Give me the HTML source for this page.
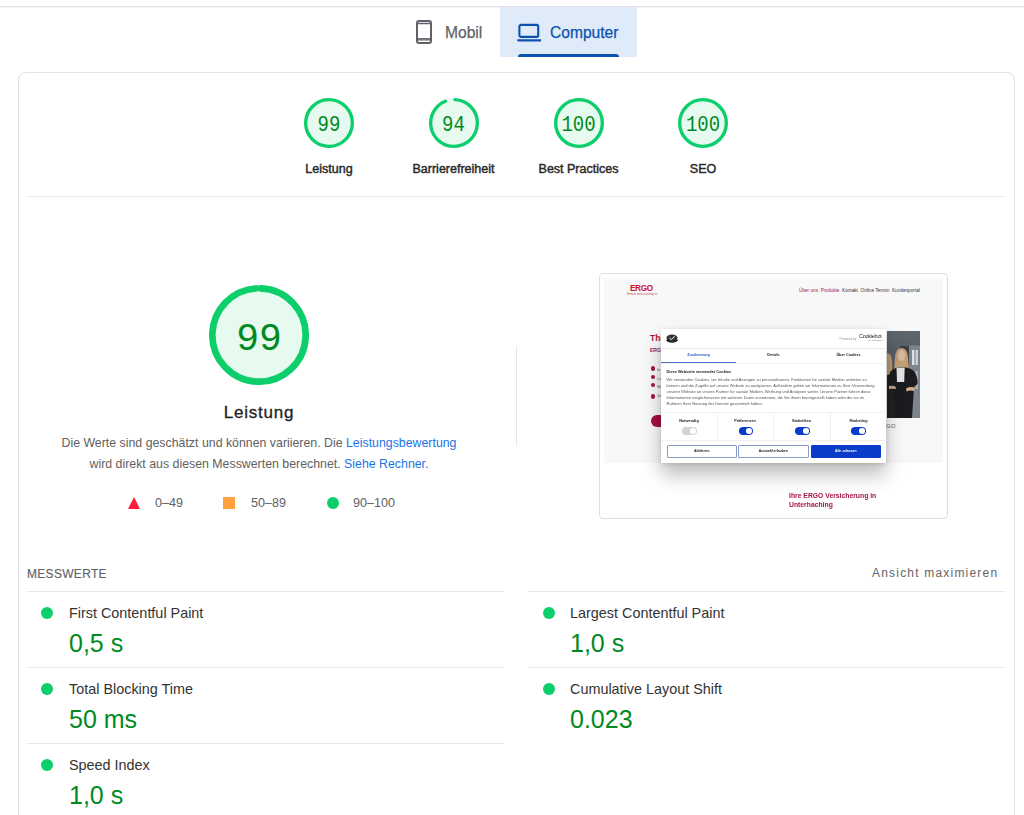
<!DOCTYPE html>
<html><head><meta charset="utf-8">
<style>
*{box-sizing:border-box}
html,body{margin:0;padding:0}
body{width:1024px;height:815px;overflow:hidden;background:#fff;font-family:"Liberation Sans",sans-serif;position:relative;color:#202124}
.a{position:absolute}
.topline{left:0;top:6px;width:1024px;height:1px;background:#e1e1e6;box-shadow:0 1px 0 #f4f4f7}
.tabd{left:500px;top:7px;width:137px;height:50px;background:#dfebf9}
.tabd .ul{position:absolute;left:18px;top:47px;width:101px;height:3px;background:#0b51b0;border-radius:3px 3px 0 0}
.tabtxt{font-size:15.6px;line-height:17px;margin-top:1px;-webkit-text-stroke:0.25px currentColor;white-space:nowrap}
.card{left:18px;top:72px;width:997px;height:760px;border:1px solid #e1e1e6;border-radius:8px}
.hr{height:1px;background:#e6e6e6}
.g{width:50px;height:50px}
.gnum{font-family:"Liberation Mono",monospace;font-size:19px;transform:scaleY(1.15);color:#008a1f;text-align:center;width:60px;line-height:20px}
.glbl{font-size:12.5px;letter-spacing:0px;-webkit-text-stroke:0.45px currentColor;color:#2a2a2a;white-space:nowrap;text-align:center;line-height:16px;width:120px}
.desc{font-size:12.35px;color:#616161;line-height:21px;text-align:center;white-space:nowrap}
.desc a{color:#1a73e8;text-decoration:none}
.leg{font-size:12.6px;color:#616161;line-height:16px;white-space:nowrap}
.mh{font-size:12px;color:#5f6368;-webkit-text-stroke:0.2px currentColor;letter-spacing:0.3px;line-height:14px;white-space:nowrap}
.mt{font-size:14.4px;color:#333;line-height:16px;white-space:nowrap}
.mv{font-size:25px;color:#008a1f;line-height:28px;white-space:nowrap}
.dot{width:12px;height:12px;border-radius:50%;background:#0cce6b}
.snav{font-size:4.7px;color:#333;line-height:5px;white-space:nowrap}
.chk{width:4.6px;height:4.6px;border-radius:50%;background:#a3173d}
.dtab{font-size:3.75px;font-weight:bold;color:#222;text-align:center;line-height:5px;white-space:nowrap}
.dlbl{font-size:3.8px;font-weight:bold;color:#222;text-align:center;line-height:4px;white-space:nowrap}
.tg{width:14.5px;height:7.6px;border-radius:4px;background:#0a3cc9}
.tg::after{content:"";position:absolute;right:1px;top:1px;width:5.6px;height:5.6px;border-radius:50%;background:#fff}
.dbtn{height:12.5px;border:0.8px solid #8a9cc8;border-radius:1px;font-size:3.4px;font-weight:bold;color:#222;text-align:center;line-height:11px;white-space:nowrap;background:#fff}
</style></head>
<body>
<div class="a topline"></div>

<!-- tabs -->
<svg class="a" style="left:416px;top:20px" width="16" height="24" viewBox="0 0 16 24">
  <rect x="1" y="1" width="14" height="22" rx="2" fill="none" stroke="#5f6368" stroke-width="2"/>
  <rect x="1" y="18" width="14" height="3" fill="#5f6368" opacity="0.5"/>
  <line x1="1" y1="3.5" x2="15" y2="3.5" stroke="#5f6368" stroke-width="1.5"/>
  <line x1="1" y1="19" x2="15" y2="19" stroke="#5f6368" stroke-width="1.5"/>
</svg>
<div class="a tabtxt" style="left:445px;top:23px;color:#5f6368">Mobil</div>

<div class="a tabd">
  <svg class="a" style="left:17px;top:16px" width="24" height="19" viewBox="0 0 24 19">
    <rect x="2.4" y="1.9" width="18.8" height="12" rx="1.6" fill="none" stroke="#0b51b0" stroke-width="2.1"/>
    <line x1="1.2" y1="17.3" x2="23.3" y2="17.3" stroke="#0b51b0" stroke-width="2.2" stroke-linecap="round"/>
  </svg>
  <div class="a tabtxt" style="left:50px;top:16px;color:#0b51b0">Computer</div>
  <div class="ul"></div>
</div>

<!-- card -->
<div class="a card"></div>

<!-- small gauges -->
<svg class="a" style="left:304px;top:98px" width="50" height="50" viewBox="0 0 120 120">
  <circle cx="60" cy="60" r="56" fill="#e7faf0" stroke="#e7faf0" stroke-width="8"/>
  <circle cx="60" cy="60" r="56" fill="none" stroke="#0cce6b" stroke-width="8" stroke-linecap="round" stroke-dasharray="345 352" transform="rotate(-87.85 60 60)"/>
</svg>
<div class="a gnum" style="left:299px;top:115px">99</div>
<div class="a glbl" style="left:269px;top:161px">Leistung</div>
<svg class="a" style="left:428.5px;top:98px" width="50" height="50" viewBox="0 0 120 120">
  <circle cx="60" cy="60" r="56" fill="#e7faf0" stroke="#e7faf0" stroke-width="8"/>
  <circle cx="60" cy="60" r="56" fill="none" stroke="#0cce6b" stroke-width="8" stroke-linecap="round" stroke-dasharray="326.3 352" transform="rotate(-87.5 60 60)"/>
</svg>
<div class="a gnum" style="left:423.5px;top:115px">94</div>
<div class="a glbl" style="left:393.5px;top:161px">Barrierefreiheit</div>
<svg class="a" style="left:553.5px;top:98px" width="50" height="50" viewBox="0 0 120 120">
  <circle cx="60" cy="60" r="56" fill="#e7faf0" stroke="#e7faf0" stroke-width="8"/>
  <circle cx="60" cy="60" r="56" fill="none" stroke="#0cce6b" stroke-width="8" stroke-linecap="round" stroke-dasharray="351.86 352" transform="rotate(-90 60 60)"/>
</svg>
<div class="a gnum" style="left:548.5px;top:115px">100</div>
<div class="a glbl" style="left:518.5px;top:161px">Best Practices</div>
<svg class="a" style="left:678px;top:98px" width="50" height="50" viewBox="0 0 120 120">
  <circle cx="60" cy="60" r="56" fill="#e7faf0" stroke="#e7faf0" stroke-width="8"/>
  <circle cx="60" cy="60" r="56" fill="none" stroke="#0cce6b" stroke-width="8" stroke-linecap="round" stroke-dasharray="351.86 352" transform="rotate(-90 60 60)"/>
</svg>
<div class="a gnum" style="left:673px;top:115px">100</div>
<div class="a glbl" style="left:643px;top:161px">SEO</div>


<div class="a hr" style="left:27px;top:196px;width:978px"></div>

<!-- big gauge -->
<svg class="a" style="left:209px;top:285px" width="100" height="100" viewBox="0 0 120 120">
  <circle cx="60" cy="60" r="56" fill="#e7faf0" stroke="#e7faf0" stroke-width="8"/>
  <circle cx="60" cy="60" r="56" fill="none" stroke="#0cce6b" stroke-width="8" stroke-linecap="round" stroke-dasharray="345 352" transform="rotate(-87.85 60 60)"/>
</svg>
<div class="a" style="left:209px;top:321px;width:100px;text-align:center;font-family:'Liberation Mono',monospace;font-size:38px;line-height:38px;color:#008a1f">99</div>
<div class="a" style="left:159px;top:403px;width:200px;text-align:center;font-size:17px;letter-spacing:0.75px;-webkit-text-stroke:0.3px currentColor;line-height:20px;color:#222">Leistung</div>
<div class="a desc" style="left:0;top:433px;width:518px">Die Werte sind geschätzt und können variieren. Die <a>Leistungsbewertung</a><br>wird direkt aus diesen Messwerten berechnet. <a>Siehe Rechner.</a></div>

<svg class="a" style="left:128px;top:497px" width="12" height="12" viewBox="0 0 12 12"><polygon points="6,0 12,12 0,12" fill="#ff1f3a"/></svg>
<div class="a leg" style="left:155px;top:495px">0–49</div>
<div class="a" style="left:223px;top:497px;width:12px;height:12px;background:#ffa23d"></div>
<div class="a leg" style="left:251px;top:495px">50–89</div>
<div class="a dot" style="left:327px;top:497px"></div>
<div class="a leg" style="left:353px;top:495px">90–100</div>

<div class="a" style="left:516px;top:346px;width:1px;height:100px;background:#e6e6e6"></div>

<!-- screenshot -->
<div class="a" id="shotwrap" style="left:599px;top:273px;width:349px;height:246px;border:1px solid #dedede;border-radius:4px;overflow:hidden;background:#fff"><div class="a" id="shotin" style="left:0;top:0;width:347px;height:244px;filter:blur(0.3px)">
  <div class="a" style="left:4px;top:4px;width:339px;height:185px;background:#f8f8f8"></div>
  <div class="a" style="left:30px;top:10px;font-size:8.2px;font-weight:bold;color:#c8102e;line-height:10px;letter-spacing:-0.35px">ERGO</div>
  <div class="a" style="left:27px;top:18.5px;font-size:2.6px;line-height:3px;color:#c04060;white-space:nowrap">Einfach, weil es wichtig ist.</div>
  <div class="a snav" style="left:199px;top:14px">
    <span style="color:#a01a4a">Über uns</span>&nbsp;&nbsp;<span style="color:#a01a4a">Produkte</span>&nbsp;&nbsp;Kontakt&nbsp;&nbsp;Online Termin&nbsp;&nbsp;Kundenportal
  </div>
  <div class="a" style="left:50px;top:59px;font-size:8.5px;font-weight:bold;color:#a3173d;line-height:10px">The</div>
  <div class="a" style="left:50px;top:72.5px;font-size:5px;font-weight:bold;color:#a3173d;line-height:6px">ERGO</div>
  <div class="a chk" style="left:50.5px;top:92px"></div>
  <div class="a chk" style="left:50.5px;top:100.5px"></div>
  <div class="a chk" style="left:50.5px;top:108.8px"></div>
  <div class="a chk" style="left:50.5px;top:120px"></div>
  <div class="a" style="left:57px;top:92px;font-size:4px;line-height:8.5px;color:#555">In<br>Lo<br>Mi<br>Je</div>
  <div class="a" style="left:51px;top:140.5px;width:30px;height:12.5px;border-radius:6.5px;background:#a50f3c"></div>
  <svg class="a" style="left:286.5px;top:57px;filter:blur(0.35px)" width="33" height="87" viewBox="0 0 33 87">
    <defs><linearGradient id="pg" x1="0" y1="0" x2="0" y2="1"><stop offset="0" stop-color="#5e666d"/><stop offset="0.5" stop-color="#50575d"/><stop offset="1" stop-color="#383c40"/></linearGradient></defs>
    <rect width="33" height="87" fill="url(#pg)"/>
    <rect x="13" y="15" width="9" height="72" fill="#3b4045"/>
    <rect x="22" y="14.5" width="11" height="73" fill="#7e8489"/>
    <rect x="25" y="19" width="2.4" height="15" fill="#dfe2e4"/><rect x="28.5" y="19" width="2.4" height="15" fill="#d0d3d6"/>
    <rect x="25" y="40" width="2.4" height="18" fill="#b9bdc0"/><rect x="28.5" y="40" width="2.4" height="18" fill="#aeb2b5"/>
    <path d="M0 22 Q4 22 5 29 L5.5 45 L0 45Z" fill="#b89870"/>
    <path d="M0 44 L8 42 L9 87 L0 87Z" fill="#202124"/>
    <path d="M8 27 Q8.5 17 14.5 17 Q20.5 17 21 27 L22 39 L19 37 L10 37 L7 39Z" fill="#c29f76"/>
    <ellipse cx="14.5" cy="24.5" rx="3.6" ry="5.4" fill="#d8b9a0"/>
    <path d="M3 41 Q8 36 14 36 Q22 36 27 40 Q31 46 30.5 53 L27 56 L25 87 L8 87 L7 60 L2 57Z" fill="#1b1c1f"/>
    <path d="M9.5 36.5 L17.7 36.5 L17.2 51 L10 51Z" fill="#e4e4e4"/>
    <path d="M19 57.5 Q24 55 28 57 L27 60 Q23 59 19.5 60.5Z" fill="#d2ad90"/>
    <path d="M2 55 Q6 54 9 56 L8.5 58 Q5 57.5 2 58Z" fill="#caa58a"/>
  </svg>
  <div class="a" style="left:286px;top:148px;font-size:6.2px;color:#666;line-height:8px">GO</div>
  <div class="a" style="left:189px;top:216.5px;font-size:6.8px;font-weight:bold;color:#a3173d;line-height:9.7px">Ihre ERGO Versicherung in<br>Unterhaching</div>

  <div class="a" id="dlg" style="left:61px;top:55.2px;width:225px;height:134px;background:#fff;box-shadow:0 12px 18px rgba(0,0,0,0.26),0 1px 5px rgba(0,0,0,0.14)">
    <svg class="a" style="left:5px;top:5px" width="12" height="9" viewBox="0 0 12 9"><ellipse cx="6" cy="6.2" rx="5.5" ry="2.6" fill="#222"/><ellipse cx="6" cy="3.8" rx="5.5" ry="3.2" fill="#333"/><path d="M3.5 4 L5.3 5.5 L8.7 2.3" stroke="#fff" stroke-width="1" fill="none"/></svg>
    <div class="a" style="left:178.5px;top:7.6px;font-size:3.2px;color:#999;line-height:4px;white-space:nowrap">Powered by</div>
    <div class="a" style="left:198px;top:4.2px;font-size:5.5px;color:#2a2a2a;line-height:7px;letter-spacing:-0.25px">Cookiebot</div><div class="a" style="left:208px;top:10.2px;font-size:2px;color:#777;line-height:2px;white-space:nowrap">by Usercentrics</div>
    <div class="a" style="left:0;top:19px;width:226px;height:1px;background:#ececec"></div>
    <div class="a dtab" style="left:0;top:23.5px;width:75px;color:#2c56c9">Zustimmung</div>
    <div class="a dtab" style="left:75px;top:23.5px;width:75px">Details</div>
    <div class="a dtab" style="left:150px;top:23.5px;width:75px">Über Cookies</div>
    <div class="a" style="left:0;top:33.5px;width:226px;height:1px;background:#f0f0f0"></div>
    <div class="a" style="left:0;top:33px;width:75px;height:1px;background:#4d6fc9"></div>
    <div class="a" style="left:5.5px;top:40px;font-size:3.88px;font-weight:bold;color:#222;line-height:5px;white-space:nowrap">Diese Webseite verwendet Cookies</div>
    <div class="a" style="left:5.5px;top:47.5px;font-size:4.03px;color:#555;line-height:6.1px;white-space:nowrap">Wir verwenden Cookies, um Inhalte und Anzeigen zu personalisieren, Funktionen für soziale Medien anbieten zu<br>können und die Zugriffe auf unsere Website zu analysieren. Außerdem geben wir Informationen zu Ihrer Verwendung<br>unserer Website an unsere Partner für soziale Medien, Werbung und Analysen weiter. Unsere Partner führen diese<br>Informationen möglicherweise mit weiteren Daten zusammen, die Sie ihnen bereitgestellt haben oder die sie im<br>Rahmen Ihrer Nutzung der Dienste gesammelt haben.</div>
    <div class="a" style="left:0;top:83px;width:226px;height:1px;background:#f0f0f0"></div>
    <div class="a" style="left:56px;top:84px;width:1px;height:27px;background:#f0f0f0"></div>
    <div class="a" style="left:112px;top:84px;width:1px;height:27px;background:#f0f0f0"></div>
    <div class="a" style="left:169px;top:84px;width:1px;height:27px;background:#f0f0f0"></div>
    <div class="a" style="left:0;top:111px;width:226px;height:1px;background:#f0f0f0"></div>
    <div class="a dlbl" style="left:0;top:89.5px;width:56px">Notwendig</div>
    <div class="a dlbl" style="left:56px;top:89.5px;width:56px">Präferenzen</div>
    <div class="a dlbl" style="left:112px;top:89.5px;width:57px">Statistiken</div>
    <div class="a dlbl" style="left:169px;top:89.5px;width:57px">Marketing</div>
    <div class="a tg" style="left:21px;top:98.2px;background:#d4d4d4"></div>
    <div class="a tg" style="left:77.5px;top:98.2px"></div>
    <div class="a tg" style="left:134px;top:98.2px"></div>
    <div class="a tg" style="left:190px;top:98.2px"></div>
    <div class="a dbtn" style="left:5.5px;top:116px;width:70.5px">Ablehnen</div>
    <div class="a dbtn" style="left:77px;top:116px;width:70.5px">Auswahl erlauben</div>
    <div class="a dbtn" style="left:149.5px;top:116px;width:70.5px;background:#0a3cc9;border-color:#0a3cc9;color:#fff">Alle zulassen</div>
  </div>
</div>


</div>
<!-- metrics -->
<div class="a mh" style="left:27px;top:567px;-webkit-text-stroke:0.15px #5f6368">MESSWERTE</div>
<div class="a mh" style="left:872px;top:566.3px;letter-spacing:1.2px;-webkit-text-stroke:0;color:#666">Ansicht maximieren</div>

<div class="a hr" style="left:27px;top:591px;width:477px"></div>
<div class="a hr" style="left:528px;top:591px;width:477px"></div>
<div class="a hr" style="left:27px;top:667px;width:477px"></div>
<div class="a hr" style="left:528px;top:667px;width:477px"></div>
<div class="a hr" style="left:27px;top:743px;width:477px"></div>

<div class="a dot" style="left:41px;top:607px"></div>
<div class="a mt" style="left:69px;top:605px">First Contentful Paint</div>
<div class="a mv" style="left:69px;top:629px">0,5 s</div>

<div class="a dot" style="left:543px;top:607px"></div>
<div class="a mt" style="left:570px;top:605px">Largest Contentful Paint</div>
<div class="a mv" style="left:570px;top:629px">1,0 s</div>

<div class="a dot" style="left:41px;top:683px"></div>
<div class="a mt" style="left:69px;top:681px">Total Blocking Time</div>
<div class="a mv" style="left:69px;top:705px">50 ms</div>

<div class="a dot" style="left:543px;top:683px"></div>
<div class="a mt" style="left:570px;top:681px">Cumulative Layout Shift</div>
<div class="a mv" style="left:570px;top:705px">0.023</div>

<div class="a dot" style="left:41px;top:759px"></div>
<div class="a mt" style="left:69px;top:757px">Speed Index</div>
<div class="a mv" style="left:69px;top:781px">1,0 s</div>

</body></html>
